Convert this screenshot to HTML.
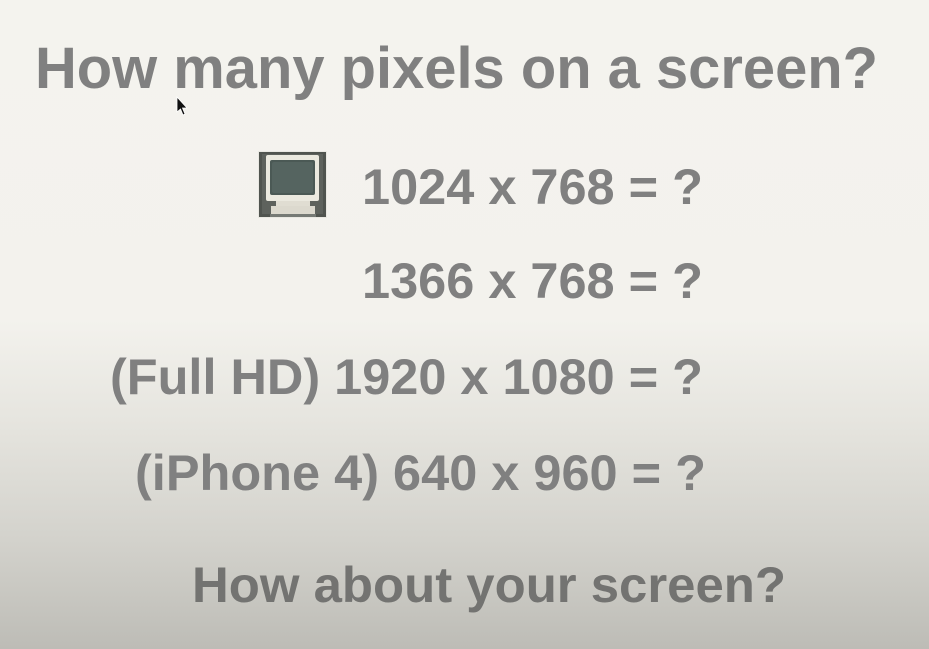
<!DOCTYPE html>
<html><head><meta charset="utf-8"><style>
html,body{margin:0;padding:0;width:929px;height:649px;overflow:hidden}
body{background:linear-gradient(to bottom,#f4f3ee 0px,#f3f2ed 320px,#e6e5df 420px,#d3d2cc 540px,#bdbcb6 649px)}
svg{position:absolute;left:0;top:0}
text{font-family:"Liberation Sans",sans-serif;font-weight:bold;fill:#808080}
</style></head><body>
<svg width="929" height="649" viewBox="0 0 929 649">
<text x="35" y="88" font-size="58" textLength="843" lengthAdjust="spacingAndGlyphs">How many pixels on a screen?</text>
<text x="362" y="204" font-size="50" textLength="341" lengthAdjust="spacingAndGlyphs">1024 x 768 = ?</text>
<text x="362" y="298" font-size="50" textLength="341" lengthAdjust="spacingAndGlyphs">1366 x 768 = ?</text>
<text x="110" y="394" font-size="50" textLength="593" lengthAdjust="spacingAndGlyphs">(Full HD) 1920 x 1080 = ?</text>
<text x="135" y="490" font-size="50" textLength="571" lengthAdjust="spacingAndGlyphs" fill="#7a7a78">(iPhone 4) 640 x 960 = ?</text>
<text x="192" y="602" font-size="50" textLength="594" lengthAdjust="spacingAndGlyphs" style="fill:#737371">How about your screen?</text>
<!-- monitor -->
<rect x="258" y="151" width="69" height="67" fill="#e9e8e2"/>
<rect x="259" y="152" width="67" height="65" fill="#50544f"/>
<rect x="262" y="154" width="61" height="60" fill="#5e625d"/>
<rect x="266" y="155" width="53" height="46" rx="2" fill="#ebe9df"/>
<rect x="270" y="160" width="45" height="35" rx="2" fill="#4b5955"/>
<rect x="272" y="162" width="41" height="31" rx="2" fill="#556460"/>
<rect x="276" y="201" width="34" height="5" fill="#e0ddd2"/>
<rect x="271" y="206" width="44" height="8" fill="#dcd9ce"/>
<rect x="270" y="214" width="46" height="3" fill="#767a75"/>
<!-- cursor -->
<path d="M177 97 L177 112 L180.5 109 L183 115 L185 114 L182.5 108 L187 108 Z" fill="#111" stroke="#fff" stroke-width="0.8"/>
</svg>
</body></html>
